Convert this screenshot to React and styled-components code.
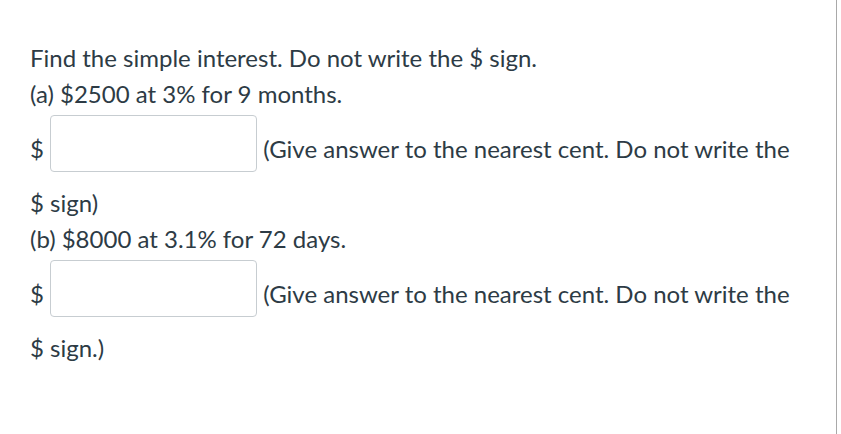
import styled, { createGlobalStyle } from "styled-components";

const GlobalStyle = createGlobalStyle`
    html, body {
        margin: 0;
        padding: 0;
        background: #ffffff;
    }
`

const StyledPage = styled.div`
    box-sizing: border-box;
    width: 837px;
    height: 434px;
    padding: 40px 36px 0 30px;
    border-right: 1px solid #a9a9a9;
    font-family: Lato, "Noto Sans", sans-serif;
    font-size: 24px;
    line-height: 36px;
    color: #2d3b45;
`

const StyledText = styled.div`
    margin: 0;
`

const StyledAnswer = styled.input`
    box-sizing: border-box;
    width: 207px;
    height: 57px;
    margin: 3px 0 13px 0;
    padding: 4px 8px;
    border: 1px solid #c7cdd1;
    border-radius: 4px;
    background: #ffffff;
    font-family: inherit;
    font-size: 20px;
    color: #2d3b45;
    vertical-align: 6px;
    outline: none;
`

const parts = [
    { label: "(a) $2500 at 3% for 9 months.", tail: "(Give answer to the nearest cent. Do not write the $ sign)" },
    { label: "(b) $8000 at 3.1% for 72 days.", tail: "(Give answer to the nearest cent. Do not write the $ sign.)" },
]

function App() {
    return (
        <>
            <GlobalStyle />
            <StyledPage>
                <StyledText>Find the simple interest. Do not write the $ sign.</StyledText>
                {parts.map((part) => (
                    <div key={part.label}>
                        <StyledText>{part.label}</StyledText>
                        <StyledText>
                            $ <StyledAnswer type="text" aria-label="answer" /> {part.tail}
                        </StyledText>
                    </div>
                ))}
            </StyledPage>
        </>
    )
}

export default App
